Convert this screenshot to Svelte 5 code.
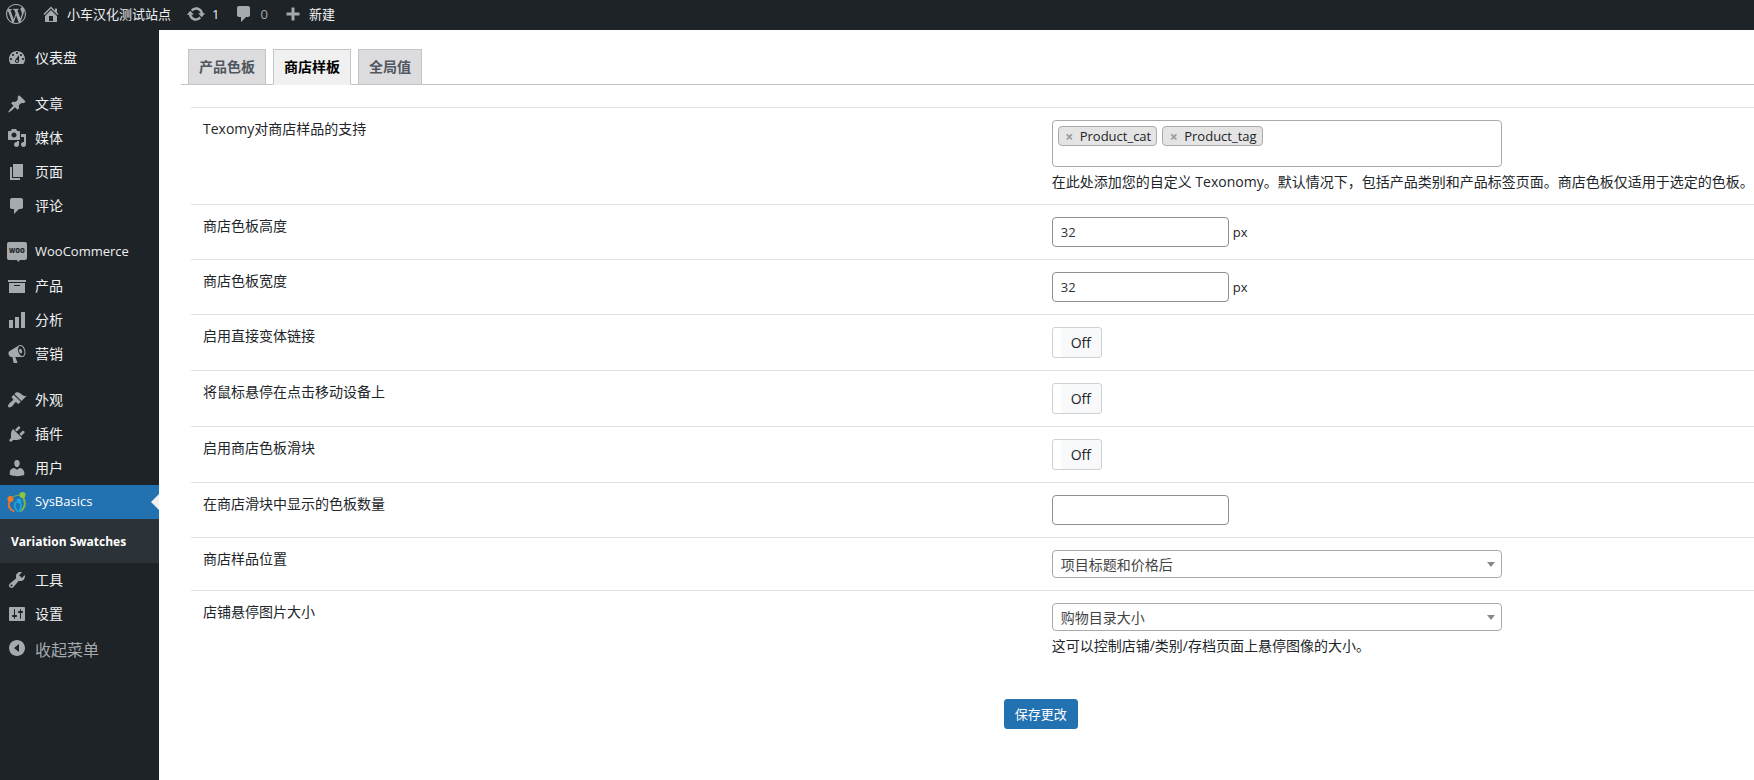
<script lang="ts">
	type MenuItem = { label: string; icon: string; gap?: boolean; latin?: boolean };

	const icons: Record<string, string> = {
		wordpress:
			'M20 10c0-5.51-4.49-10-10-10C4.48 0 0 4.49 0 10c0 5.52 4.48 10 10 10 5.51 0 10-4.48 10-10zM7.78 15.37L4.37 6.22c.55-.02 1.17-.08 1.17-.08.5-.06.44-1.13-.06-1.11 0 0-1.45.11-2.37.11-.18 0-.37 0-.58-.01C4.12 2.69 6.87 1.11 10 1.11c2.33 0 4.45.87 6.05 2.34-.68-.11-1.65.39-1.65 1.58 0 .74.45 1.36.9 2.1.35.61.55 1.36.55 2.46 0 1.49-1.4 5-1.4 5l-3.03-8.37c.54-.02.82-.17.82-.17.5-.05.44-1.25-.06-1.22 0 0-1.44.12-2.38.12-.87 0-2.33-.12-2.33-.12-.5-.03-.56 1.2-.06 1.22l.92.08 1.26 3.41zM17.41 10c.24-.64.74-1.87.43-4.25.7 1.29 1.05 2.71 1.05 4.25 0 3.29-1.73 6.24-4.4 7.78.97-2.59 1.94-5.2 2.92-7.78zM6.1 18.09C3.12 16.65 1.11 13.53 1.11 10c0-1.3.23-2.48.72-3.59C3.25 10.3 4.67 14.2 6.1 18.09zm4.03-6.63l2.58 6.98c-.86.29-1.76.45-2.71.45-.79 0-1.57-.11-2.29-.33.81-2.38 1.62-4.74 2.42-7.1z',
		home: 'M16 8.5l1.53 1.53-1.06 1.06L10 4.6l-6.47 6.49-1.06-1.06L10 2.5l4 4v-2h2v4zm-6-2.46l6 5.99V18H4v-5.97zM12 17v-5H8v5h4z',
		update:
			'M10.2 3.28c3.53 0 6.43 2.61 6.92 6h2.08l-3.5 4-3.5-4h2.32c-.45-1.97-2.21-3.45-4.32-3.45-1.45 0-2.73.71-3.54 1.78L4.95 5.66C6.23 4.2 8.11 3.28 10.2 3.28zm-.4 13.44c-3.52 0-6.43-2.61-6.92-6H.8l3.5-4c1.17 1.33 2.33 2.67 3.5 4H5.48c.45 1.97 2.21 3.45 4.32 3.45 1.45 0 2.73-.71 3.54-1.78l1.71 1.95c-1.28 1.46-3.15 2.38-5.25 2.38z',
		plus: 'M16.5 8.5v3h-5v5h-3v-5h-5v-3h5v-5h3v5z',
		dashboard:
			'M3.76 16h12.48c1.1-1.37 1.76-3.11 1.76-5 0-4.42-3.58-8-8-8s-8 3.58-8 8c0 1.89.66 3.63 1.76 5zM10 4c.55 0 1 .45 1 1s-.45 1-1 1-1-.45-1-1 .45-1 1-1zM6 6c.55 0 1 .45 1 1s-.45 1-1 1-1-.45-1-1 .45-1 1-1zm8 0c.55 0 1 .45 1 1s-.45 1-1 1-1-.45-1-1 .45-1 1-1zm-5.37 5.55L12 7v6c0 1.1-.9 2-2 2s-2-.9-2-2c0-.57.24-1.08.63-1.45zM4 10c.55 0 1 .45 1 1s-.45 1-1 1-1-.45-1-1 .45-1 1-1zm12 0c.55 0 1 .45 1 1s-.45 1-1 1-1-.45-1-1 .45-1 1-1zm-5 3c0-.55-.45-1-1-1s-1 .45-1 1 .45 1 1 1 1-.45 1-1z',
		post: 'M10.44 3.02l1.82-1.82 6.36 6.35-1.83 1.82c-1.05-.68-2.48-.57-3.41.36l-.75.75c-.92.93-1.04 2.35-.35 3.41l-1.83 1.82-2.41-2.41-2.8 2.79c-.42.42-3.38 2.71-3.8 2.29s1.86-3.39 2.28-3.81l2.79-2.79L4.1 9.36l1.83-1.82c1.05.69 2.48.57 3.4-.36l.75-.75c.93-.92 1.05-2.35.36-3.41z',
		media:
			'M13 11V4c0-.55-.45-1-1-1h-1.67L9 1H5L3.67 3H2c-.55 0-1 .45-1 1v7c0 .55.45 1 1 1h10c.55 0 1-.45 1-1zM7 4.5c1.38 0 2.5 1.12 2.5 2.5S8.38 9.5 7 9.5 4.5 8.38 4.5 7 5.62 4.5 7 4.5zM14 6h5v10.5c0 1.38-1.12 2.5-2.5 2.5S14 17.88 14 16.5s1.12-2.5 2.5-2.5c.17 0 .34.02.5.05V9h-3V6zm-4 8.05V13h2v3.5c0 1.38-1.12 2.5-2.5 2.5S7 17.88 7 16.5 8.12 14 9.5 14c.17 0 .34.02.5.05z',
		page: 'M6 15V2h10v13H6zm-1 1h8v2H3V5h2v11z',
		comments:
			'M5 2h9c1.1 0 2 .9 2 2v7c0 1.1-.9 2-2 2h-2l-5 5v-5H5c-1.1 0-2-.9-2-2V4c0-1.1.9-2 2-2z',
		archive: 'M19 4v2H1V4h18zM2 7h16v10H2V7zm11 3V9H7v1h6z',
		chart: 'M18 18V2h-4v16h4zm-6 0V7H8v11h4zm-6 0v-8H2v8h4z',
		megaphone:
			'M18.15 5.94c.46 1.62.38 3.22-.02 4.48-.42 1.28-1.26 2.18-2.3 2.48-.16.06-.26.06-.4.06-.06.02-.12.02-.18.02-.06.02-.14.02-.22.02h-6.8l2.22 5.5c.02.14-.06.26-.14.34-.08.1-.24.16-.34.16H6.95c-.1 0-.26-.06-.34-.16-.08-.08-.16-.2-.14-.34l-1-5.5H4.25l-.02-.02c-.5.06-1.08-.18-1.54-.62s-.88-1.08-1.06-1.88c-.24-.8-.2-1.56-.02-2.2.18-.62.58-1.08 1.06-1.3l.02-.02 9-5.4c.1-.06.18-.1.24-.16.06-.04.14-.08.24-.12.16-.08.28-.12.5-.18 1.04-.3 2.24.1 3.22.98s1.84 2.24 2.26 3.86zm-2.58 5.98h-.02c.4-.1.74-.34 1.04-.7.58-.7.86-1.76.86-3.04 0-.64-.1-1.3-.28-1.98-.34-1.36-1.02-2.5-1.78-3.24s-1.68-1.1-2.46-.88c-.82.22-1.4.96-1.7 2-.32 1.04-.28 2.36.06 3.72.38 1.36 1 2.5 1.8 3.24.78.74 1.62 1.1 2.48.88zm-2.54-7.08c.22-.04.42-.02.62.04.38.16.76.48 1.02 1s.42 1.2.42 1.78c0 .3-.04.56-.12.8-.18.48-.44.84-.86.94-.34.1-.8-.06-1.14-.4s-.64-.86-.78-1.5c-.18-.62-.12-1.24.02-1.72s.48-.84.82-.94z',
		appearance:
			'M14.48 11.06L7.41 3.99l1.5-1.5c.5-.56 2.3-.47 3.51.32 1.21.8 1.43 1.28 2.91 2.1 1.18.64 2.45 1.26 4.45.85zm-.71.71L6.7 4.7 4.93 6.47c-.39.39-.39 1.02 0 1.41l1.06 1.06c.39.39.39 1.03 0 1.42-.6.6-1.43 1.11-2.21 1.69-.35.26-.7.53-1.01.84C1.43 14.23.4 16.08 1.4 17.07c.99 1 2.84-.03 4.18-1.36.31-.31.58-.66.85-1.02.57-.78 1.08-1.61 1.69-2.21.39-.39 1.02-.39 1.41 0l1.06 1.06c.39.39 1.02.39 1.41 0z',
		plugins:
			'M13.11 4.36L9.87 7.6 8 5.73l3.24-3.24c.35-.34 1.05-.2 1.56.32.52.51.66 1.21.31 1.55zm-8 1.77l.91-1.12 9.01 9.01-1.19.84c-.71.71-2.63 1.16-3.82 1.16H6.14L4.9 17.26c-.59.59-1.54.59-2.12 0-.59-.58-.59-1.53 0-2.12l1.24-1.24v-3.88c0-1.13.4-3.19 1.09-3.89zm7.26 3.97l3.24-3.24c.34-.35 1.04-.21 1.55.31.52.51.66 1.21.31 1.55l-3.24 3.25z',
		users:
			'M10 9.25c-2.27 0-2.73-3.44-2.73-3.44C7 4.02 7.82 2 9.97 2c2.16 0 2.98 2.02 2.71 3.81 0 0-.41 3.44-2.68 3.44zm0 2.57L12.72 10c2.39 0 4.52 2.33 4.52 4.53v2.49s-3.65 1.13-7.24 1.13c-3.65 0-7.24-1.13-7.24-1.13v-2.49c0-2.25 1.94-4.48 4.47-4.48z',
		tools:
			'M16.68 9.77c-1.34 1.34-3.3 1.67-4.95.99l-5.41 6.52c-.99.99-2.59.99-3.58 0s-.99-2.59 0-3.57l6.52-5.42c-.68-1.65-.35-3.61.99-4.95 1.28-1.28 3.12-1.62 4.72-1.06l-2.89 2.89 2.82 2.82 2.86-2.87c.53 1.58.18 3.39-1.08 4.65zM3.81 16.21c.4.39 1.04.39 1.43 0 .4-.4.4-1.04 0-1.43-.39-.4-1.03-.4-1.43 0-.39.39-.39 1.03 0 1.43z',
		settings:
			'M18 16V4c0-.55-.45-1-1-1H3c-.55 0-1 .45-1 1v12c0 .55.45 1 1 1h14c.55 0 1-.45 1-1zM8 11h1c.55 0 1 .45 1 1s-.45 1-1 1H8v1.5c0 .28-.22.5-.5.5s-.5-.22-.5-.5V13H6c-.55 0-1-.45-1-1s.45-1 1-1h1V5.5c0-.28.22-.5.5-.5s.5.22.5.5V11zm5-2h-1c-.55 0-1-.45-1-1s.45-1 1-1h1V5.5c0-.28.22-.5.5-.5s.5.22.5.5V7h1c.55 0 1 .45 1 1s-.45 1-1 1h-1v5.5c0 .28-.22.5-.5.5s-.5-.22-.5-.5V9z',
		collapse:
			'M10 2c4.42 0 8 3.58 8 8s-3.58 8-8 8-8-3.58-8-8 3.58-8 8-8zm2 12V6l-5 4z'
	};

	const menuTop: MenuItem[] = [
		{ label: '仪表盘', icon: 'dashboard' },
		{ label: '文章', icon: 'post', gap: true },
		{ label: '媒体', icon: 'media' },
		{ label: '页面', icon: 'page' },
		{ label: '评论', icon: 'comments' },
		{ label: 'WooCommerce', icon: 'woo', gap: true, latin: true },
		{ label: '产品', icon: 'archive' },
		{ label: '分析', icon: 'chart' },
		{ label: '营销', icon: 'megaphone' },
		{ label: '外观', icon: 'appearance', gap: true },
		{ label: '插件', icon: 'plugins' },
		{ label: '用户', icon: 'users' }
	];

	const menuBottom: MenuItem[] = [
		{ label: '工具', icon: 'tools' },
		{ label: '设置', icon: 'settings' }
	];

	const tabs = ['产品色板', '商店样板', '全局值'];
	let activeTab = '商店样板';

	let taxonomies = ['Product_cat', 'Product_tag'];
	let search = '';

	let sizes = [
		{ id: 'swatch-height', label: '商店色板高度', value: '32' },
		{ id: 'swatch-width', label: '商店色板宽度', value: '32' }
	];

	let toggles = [
		{ id: 'direct-link', label: '启用直接变体链接', on: false },
		{ id: 'hover-mobile', label: '将鼠标悬停在点击移动设备上', on: false },
		{ id: 'slider', label: '启用商店色板滑块', on: false }
	];

	let slideCount = '';
	let position = '项目标题和价格后';
	let imageSize = '购物目录大小';

	function removeTaxonomy(name: string) {
		taxonomies = taxonomies.filter((t) => t !== name);
	}
</script>

{#snippet icon(name: string)}
	<svg class="icon" viewBox="0 0 20 20" aria-hidden="true">
		{#if name === 'woo'}
			<path
				d="M2 0h16a2 2 0 0 1 2 2v14a2 2 0 0 1-2 2h-5l-2 2-1-2H2a2 2 0 0 1-2-2V2a2 2 0 0 1 2-2z"
			/>
			<text x="10" y="11" text-anchor="middle" class="woo">WOO</text>
		{:else}
			<path fill-rule="evenodd" d={icons[name]} />
		{/if}
	</svg>
{/snippet}

<header class="adminbar">
	<a href="#about" aria-label="WordPress">{@render icon('wordpress')}</a>
	<a href="#site">{@render icon('home')}小车汉化测试站点</a>
	<a href="#updates">{@render icon('update')}1</a>
	<a href="#comments" class="muted">{@render icon('comments')}0</a>
	<a href="#new">{@render icon('plus')}新建</a>
</header>

<div class="layout">
	<nav class="sidebar">
		{#each menuTop as item}
			<a class="item" class:gap={item.gap} class:latin={item.latin} href="#{item.icon}">
				{@render icon(item.icon)}<span>{item.label}</span>
			</a>
		{/each}
		<a class="item current latin" href="#sysbasics">
			<svg class="icon" viewBox="0 0 20 20" aria-hidden="true">
				<g fill="none" stroke-linecap="round">
					<path d="M3 9c-2.500 4-.5 8.500 3.500 10" stroke="#e8762d" stroke-width="2" />
					<path d="M6 5c2.500-1.500 5-2 8-2" stroke="#7ab648" stroke-width="1" />
					<path d="M16.500 6c2.500 6 1 10.500-3 13" stroke="#7fb93d" stroke-width="2" />
					<path d="M8.500 10.500c-1.500 3-.5 6 2 8.500M13.500 11c1 3 .5 5.500-1 8" stroke="#1a9fe0" stroke-width="2" />
				</g>
				<circle cx="3.500" cy="7" r="3" fill="#f47a20" />
				<circle cx="15.500" cy="3" r="3" fill="#8cc63f" />
				<circle cx="12" cy="9" r="2.500" fill="#19a7e8" />
			</svg>
			<span>SysBasics</span>
		</a>
		<a class="submenu" href="#variation-swatches">Variation Swatches</a>
		{#each menuBottom as item}
			<a class="item" href="#{item.icon}">{@render icon(item.icon)}<span>{item.label}</span></a>
		{/each}
		<button type="button" class="collapse">{@render icon('collapse')}<span>收起菜单</span></button>
	</nav>

	<main>
		<div class="tabs" role="tablist">
			{#each tabs as tab}
				<button
					type="button"
					role="tab"
					class="tab"
					class:active={tab === activeTab}
					aria-selected={tab === activeTab}
					on:click={() => (activeTab = tab)}>{tab}</button
				>
			{/each}
		</div>

		<form on:submit|preventDefault>
			<table>
				<tbody>
					<tr>
						<th scope="row"><label for="taxonomy">Texomy对商店样品的支持</label></th>
						<td>
							<div class="multi">
								{#each taxonomies as name}
									<span class="tag">
										<button type="button" aria-label="移除 {name}" on:click={() => removeTaxonomy(name)}
											>×</button
										>{name}
									</span>
								{/each}
								<input id="taxonomy" type="text" class="search" bind:value={search} />
							</div>
							<p class="hint">
								在此处添加您的自定义 Texonomy。默认情况下，包括产品类别和产品标签页面。商店色板仅适用于选定的色板。
							</p>
						</td>
					</tr>
					{#each sizes as size}
						<tr>
							<th scope="row"><label for={size.id}>{size.label}</label></th>
							<td>
								<div class="field">
									<input id={size.id} type="text" class="number" bind:value={size.value} />
									<span>px</span>
								</div>
							</td>
						</tr>
					{/each}
					{#each toggles as toggle}
						<tr>
							<th scope="row"><label for={toggle.id}>{toggle.label}</label></th>
							<td>
								<label class="toggle" class:on={toggle.on}>
									<input id={toggle.id} type="checkbox" bind:checked={toggle.on} />
									<span>{toggle.on ? 'On' : 'Off'}</span>
								</label>
							</td>
						</tr>
					{/each}
					<tr>
						<th scope="row"><label for="slide-count">在商店滑块中显示的色板数量</label></th>
						<td>
							<div class="field">
								<input id="slide-count" type="text" class="number" bind:value={slideCount} />
							</div>
						</td>
					</tr>
					<tr>
						<th scope="row"><label for="position">商店样品位置</label></th>
						<td>
							<div class="select">
								<select id="position" bind:value={position}>
									<option>项目标题和价格后</option>
								</select>
							</div>
						</td>
					</tr>
					<tr>
						<th scope="row"><label for="image-size">店铺悬停图片大小</label></th>
						<td>
							<div class="select">
								<select id="image-size" bind:value={imageSize}>
									<option>购物目录大小</option>
								</select>
							</div>
							<p class="hint">这可以控制店铺/类别/存档页面上悬停图像的大小。</p>
						</td>
					</tr>
				</tbody>
			</table>
			<div class="actions">
				<button type="submit" class="save">保存更改</button>
			</div>
		</form>
	</main>
</div>

<style>
	:global(body) {
		margin: 0;
		background: #fff;
		color: #212529;
		font-family: 'Open Sans', 'Noto Sans CJK SC', sans-serif;
		font-size: 14px;
		line-height: 21px;
	}
	:global(#app) {
		display: flex;
		flex-direction: column;
		min-height: 100vh;
	}
	button,
	input,
	select {
		box-sizing: border-box;
		margin: 0;
		font-family: inherit;
		font-size: 14px;
	}
	a {
		text-decoration: none;
	}
	.icon {
		flex: none;
		width: 20px;
		height: 20px;
		fill: #a7aaad;
	}
	.woo {
		fill: #1d2327;
		font-size: 6px;
		font-weight: 800;
	}

	/* top bar */
	.adminbar {
		display: flex;
		gap: 15px;
		height: 30px;
		padding: 0 6px;
		box-sizing: border-box;
		background: #1d2327;
	}
	.adminbar a {
		display: flex;
		align-items: center;
		gap: 6px;
		height: 28px;
		color: #f0f0f1;
		font-size: 13px;
	}
	.adminbar .muted {
		color: #a7aaad;
	}

	/* side menu */
	.layout {
		display: flex;
		flex: 1;
	}
	.sidebar {
		flex: none;
		width: 159px;
		padding-top: 11px;
		box-sizing: border-box;
		background: #1d2327;
	}
	.item {
		position: relative;
		display: flex;
		align-items: center;
		gap: 8px;
		height: 34px;
		padding-left: 7px;
		color: #f0f0f1;
	}
	.item span {
		padding-bottom: 2px;
	}
	.item.latin {
		font-size: 13px;
	}
	.item.gap {
		margin-top: 12px;
	}
	.item.current {
		background: #2271b1;
		color: #fff;
	}
	.item.current::after {
		content: '';
		position: absolute;
		right: 0;
		top: 9px;
		border: 8px solid transparent;
		border-left-width: 0;
		border-right-color: #f0f0f1;
	}
	.submenu {
		display: flex;
		align-items: center;
		height: 44px;
		padding-left: 11px;
		background: #2c3338;
		color: #fff;
		font-size: 12px;
		font-weight: 700;
	}
	.collapse {
		display: flex;
		align-items: flex-start;
		gap: 8px;
		padding: 7px 0 0 7px;
		border: 0;
		background: none;
		color: #a7aaad;
		font-size: 16px;
		line-height: 24px;
		cursor: pointer;
	}

	/* content */
	main {
		flex: 1;
		min-width: 0;
		padding: 19px 0 0 22px;
	}
	.tabs {
		display: flex;
		gap: 7px;
		padding-left: 7px;
		border-bottom: 1px solid #c3c4c7;
	}
	.tab {
		height: 36px;
		margin-bottom: -1px;
		padding: 0 10px 2px;
		border: 1px solid #c3c4c7;
		background: #dcdcde;
		color: #50575e;
		font-weight: 600;
		cursor: pointer;
	}
	.tab.active {
		border-bottom-color: #f0f0f1;
		background: #f0f0f1;
		color: #000;
	}
	form {
		padding: 22px 0 0 10px;
	}
	table {
		width: 100%;
		table-layout: fixed;
		border-collapse: separate;
		border-spacing: 0;
	}
	th,
	td {
		box-sizing: border-box;
		padding: 12px 0 12px 12px;
		border-top: 1px solid #dee2e6;
		text-align: left;
		vertical-align: top;
		font-weight: 400;
	}
	th {
		width: 54.3%;
		line-height: 18px;
	}
	.multi {
		display: flex;
		flex-wrap: wrap;
		align-content: flex-start;
		gap: 5px;
		box-sizing: border-box;
		width: 450px;
		max-width: 100%;
		min-height: 47px;
		padding: 5px;
		border: 1px solid #aaa;
		border-radius: 4px;
	}
	.tag {
		display: flex;
		align-items: center;
		box-sizing: border-box;
		height: 20px;
		padding-right: 5px;
		border: 1px solid #aaa;
		border-radius: 4px;
		background: #e4e4e4;
		font-size: 13px;
	}
	.tag button {
		width: 21px;
		padding: 0;
		border: 0;
		background: none;
		color: #999;
		font-weight: 700;
		cursor: pointer;
	}
	.search {
		flex: 1;
		min-width: 10px;
		height: 20px;
		padding: 0;
		border: 0;
		outline: 0;
		background: none;
	}
	.hint {
		margin: 4px 0 0;
		white-space: nowrap;
	}
	.field {
		display: flex;
		align-items: center;
		gap: 4px;
	}
	.field span {
		font-size: 13px;
	}
	.number {
		width: 177px;
		height: 30px;
		padding: 0 8px;
		border: 1px solid #8c8f94;
		border-radius: 4px;
		background: #fff;
		color: #2c3338;
		font-size: 13px;
	}
	.toggle {
		display: flex;
		align-items: center;
		box-sizing: border-box;
		width: 50px;
		height: 31px;
		border: 1px solid #ced0d2;
		border-radius: 3px;
		background: linear-gradient(to right, #fff 8px, #f8f9fa 8px);
		cursor: pointer;
	}
	.toggle.on {
		background: #2271b1;
		color: #fff;
	}
	.toggle input {
		position: absolute;
		opacity: 0;
	}
	.toggle span {
		padding-left: 18px;
	}
	.select {
		position: relative;
		width: 450px;
		max-width: 100%;
	}
	.select::after {
		content: '';
		position: absolute;
		right: 7px;
		top: 12px;
		border: 4px solid transparent;
		border-top: 5px solid #888;
		border-bottom-width: 0;
		pointer-events: none;
	}
	select {
		display: block;
		width: 100%;
		height: 28px;
		padding: 0 20px 0 8px;
		border: 1px solid #aaa;
		border-radius: 4px;
		background: #fff;
		color: #444;
		appearance: none;
	}
	.actions {
		padding: 31px 0 24px 52%;
	}
	.save {
		height: 30px;
		padding: 0 10px 2px;
		border: 1px solid #2271b1;
		border-radius: 3px;
		background: #2271b1;
		color: #fff;
		font-size: 13px;
		cursor: pointer;
	}
</style>
